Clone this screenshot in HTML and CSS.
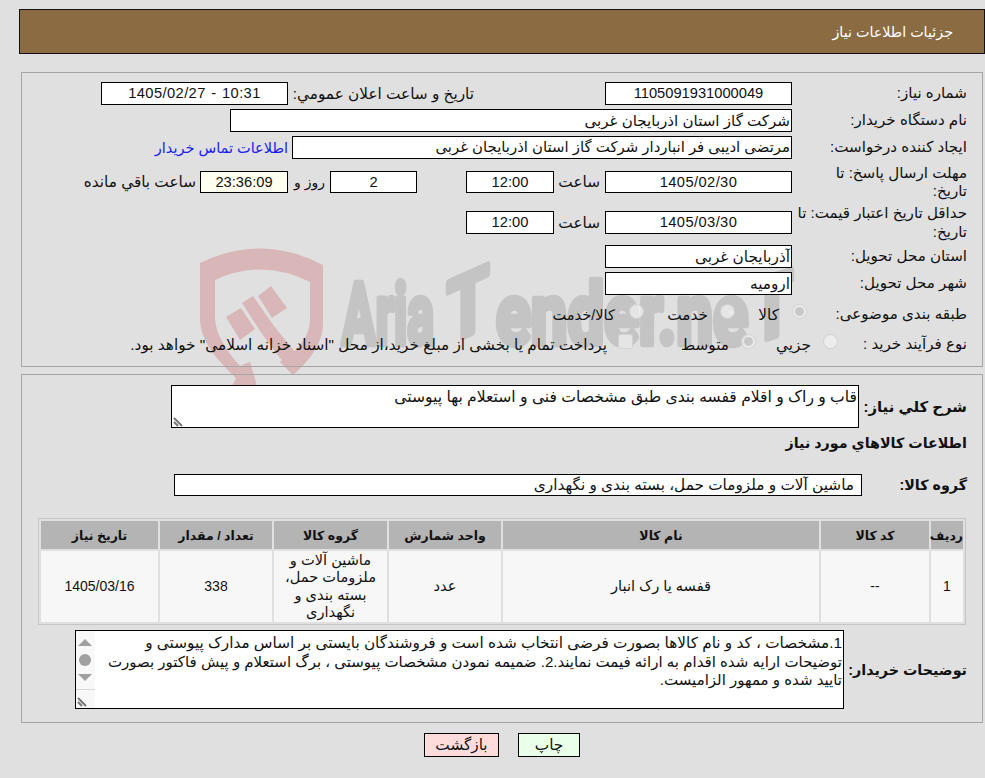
FILE: index.html
```html
<!DOCTYPE html>
<html lang="fa" dir="rtl">
<head>
<meta charset="utf-8">
<title>جزئیات اطلاعات نیاز</title>
<link rel="stylesheet" href="styles.css">
</head>
<body>
<svg class="watermark" width="985" height="440" viewBox="0 0 985 440" aria-hidden="true">
  <path class="wm-shield" fill-rule="evenodd" d="M200 263Q262 233 323 265V325Q322 350 293 375L280 362L296 350Q310 335 310 320V282Q262 258 215 280V318Q216 340 240 366L250 362L257 386H232L236 378Q200 345 200 320Z"/>
  <polygon class="wm-shield" points="226,317 241,308 255,329 240,340"/>
  <polygon class="wm-shield" points="242,303 253,296 274,326 262,334"/>
  <polygon class="wm-shield" points="258,296 271,286 287,308 272,318"/>
  <polygon class="wm-shield" points="262,334 274,326 303,362 293,375"/>
  <text class="wm-text" x="342" y="344" textLength="92" lengthAdjust="spacingAndGlyphs">Aria</text>
  <text class="wm-text" x="0" y="0" textLength="42" lengthAdjust="spacingAndGlyphs" transform="translate(447 344) skewY(-24)">T</text>
  <text class="wm-text" x="496" y="344" textLength="252" lengthAdjust="spacingAndGlyphs">ender.ne</text>
  <text class="wm-text" x="0" y="0" textLength="42" lengthAdjust="spacingAndGlyphs" transform="translate(751 344) skewY(-18)">T</text>
</svg>

<div class="page">
  <header class="title-bar">جزئیات اطلاعات نیاز</header>

  <section class="panel panel-info">
    <div class="row">
      <div class="label">شماره نیاز:</div>
      <div class="box box-main center">1105091931000049</div>
      <div class="label-inline announce">تاریخ و ساعت اعلان عمومي:</div>
      <div class="box box-main center date stamp">1405/02/27 - 10:31</div>
    </div>
    <div class="row">
      <div class="label">نام دستگاه خریدار:</div>
      <div class="box box-buyer">شرکت گاز استان اذربایجان غربی</div>
    </div>
    <div class="row">
      <div class="label">ایجاد کننده درخواست:</div>
      <div class="box box-creator">مرتضی ادیبی فر انباردار شرکت گاز استان اذربایجان غربی</div>
      <a class="contact" href="#">اطلاعات تماس خریدار</a>
    </div>
    <div class="row row-deadline">
      <div class="label">مهلت ارسال پاسخ: تا<br>تاریخ:</div>
      <div class="box box-main center date">1405/02/30</div>
      <div class="label-inline hour">ساعت</div>
      <div class="box box-time center">12:00</div>
      <div class="box box-days center">2</div>
      <div class="label-inline days">روز و</div>
      <div class="box box-count center">23:36:09</div>
      <div class="label-inline remain">ساعت باقي مانده</div>
    </div>
    <div class="row row-validity">
      <div class="label">حداقل تاریخ اعتبار قیمت: تا<br>تاریخ:</div>
      <div class="box box-main center date">1405/03/30</div>
      <div class="label-inline hour">ساعت</div>
      <div class="box box-time center">12:00</div>
    </div>
    <div class="row row-province">
      <div class="label">استان محل تحویل:</div>
      <div class="box box-main">آذربایجان غربی</div>
    </div>
    <div class="row">
      <div class="label">شهر محل تحویل:</div>
      <div class="box box-main">ارومیه</div>
    </div>
    <div class="row row-subject">
      <div class="label label-subject">طبقه بندی موضوعی:</div>
      <span class="radio checked"></span><span class="opt opt-goods">کالا</span>
      <span class="radio r-service"></span><span class="opt opt-service">خدمت</span>
      <span class="radio r-both"></span><span class="opt opt-both">کالا/خدمت</span>
    </div>
    <div class="row row-process">
      <div class="label label-process">نوع فرآیند خرید :</div>
      <span class="radio"></span><span class="opt opt-minor">جزیي</span>
      <span class="radio checked r-medium"></span><span class="opt opt-medium">متوسط</span>
      <span class="check"></span><span class="opt opt-pay">پرداخت تمام یا بخشی از مبلغ خرید،از محل "اسناد خزانه اسلامی" خواهد بود.</span>
    </div>
  </section>

  <section class="panel panel-detail">
    <div class="row row-desc">
      <div class="label-strong label-desc">شرح کلي نياز:</div>
      <div class="box box-desc">قاب و راک و اقلام قفسه بندی طبق مشخصات فنی و استعلام بها پیوستی
        <svg class="grip" width="12" height="12" viewBox="0 0 12 12"><path d="M1 3L9 11M1 7L5 11" stroke="#777" stroke-width="2"/></svg>
      </div>
    </div>
    <h2 class="label-strong section-title">اطلاعات کالاهاي مورد نياز</h2>
    <div class="row row-group">
      <div class="label-strong label-group">گروه کالا:</div>
      <div class="box box-group">ماشین آلات و ملزومات حمل، بسته بندی و نگهداری</div>
    </div>
    <table class="items">
      <colgroup>
        <col class="c-row"><col class="c-code"><col class="c-name"><col class="c-unit"><col class="c-group"><col class="c-qty"><col class="c-date">
      </colgroup>
      <thead>
        <tr><th>ردیف</th><th>کد کالا</th><th>نام کالا</th><th>واحد شمارش</th><th>گروه کالا</th><th>تعداد / مقدار</th><th>تاریخ نیاز</th></tr>
      </thead>
      <tbody>
        <tr><td>1</td><td>--</td><td class="td-text">قفسه یا رک انبار</td><td class="td-text">عدد</td><td class="td-text">ماشین آلات و ملزومات حمل، بسته بندی و نگهداری</td><td>338</td><td>1405/03/16</td></tr>
      </tbody>
    </table>
    <div class="row row-notes">
      <div class="label-strong label-notes">توضیحات خریدار:</div>
      <div class="box box-notes">
        <div class="notes-text"><span class="notes-wide">1.مشخصات ، کد و نام کالاها بصورت فرضی انتخاب شده است و فروشندگان بایستی بر اساس مدارک پیوستی و</span><br>توضیحات ارایه شده اقدام به ارائه فیمت نمایند.2. ضمیمه نمودن مشخصات پیوستی ، برگ استعلام و پیش فاکتور بصورت<br>تایید شده و ممهور الزامیست.</div>
        <div class="scroll">
          <svg class="scroll-art" width="19" height="77" viewBox="0 0 19 77">
            <path d="M2 15L9 8L16 15Z" fill="#a0a0a0"/>
            <circle cx="9" cy="29" r="6" fill="#a0a0a0"/>
            <path d="M2 43L9 50L16 43Z" fill="#a0a0a0"/>
            <path d="M0 58.5H19" stroke="#d8d8d8"/>
            <path d="M2 67L10 75M2 71L6 75" stroke="#777" stroke-width="2"/>
          </svg>
        </div>
      </div>
    </div>
  </section>

  <div class="actions">
    <button class="btn btn-print" type="button">چاپ</button>
    <button class="btn btn-back" type="button">بازگشت</button>
  </div>
</div>
</body>
</html>
```
FILE: styles.css
```css
html, body {
  margin: 0;
  padding: 0;
  background: #e0e0e0;
}
body {
  position: relative;
  width: 985px;
  height: 778px;
  overflow: hidden;
  font-family: "Liberation Sans", "DejaVu Sans", sans-serif;
  font-size: 15.3px;
  color: #111;
}
.watermark {
  position: absolute;
  left: 0;
  top: 0;
  z-index: 0;
  direction: ltr;
}
.wm-shield { fill: #d9b6b7; }
.wm-text {
  font-family: Roboto, "Liberation Sans", sans-serif;
  font-weight: 700;
  font-size: 86px;
  fill: #c4c4c4;
  stroke: #c4c4c4;
  stroke-width: 6.5px;
  stroke-linejoin: round;
}
.page {
  position: relative;
  z-index: 1;
  padding-top: 9px;
}
.title-bar {
  box-sizing: border-box;
  width: 966px;
  height: 45px;
  margin-left: 19px;
  padding-right: 31px;
  background: #8b6c42;
  border: 1px solid #111;
  color: #fff;
  font-size: 14.3px;
  line-height: 44px;
}
.panel {
  box-sizing: border-box;
  width: 962px;
  margin-right: 2px;
  margin-left: 21px;
  border: 1px solid #a5a5a5;
  padding-left: 15px;
  padding-right: 15px;
}
.panel-info {
  height: 295px;
  margin-top: 18px;
  padding-top: 9px;
}
.panel-detail {
  height: 349px;
  margin-top: 7px;
  padding-top: 10px;
}
.row {
  display: flex;
  align-items: center;
  min-height: 23px;
  margin-bottom: 4px;
}
.row-deadline { height: 38px; margin-top: 3px; margin-bottom: 3px; }
.row-validity { height: 37px; margin-bottom: 4px; }
.row-subject { margin-top: 8px; height: 23px; margin-bottom: 7px; }
.row-process { height: 23px; margin-bottom: 0; }

.label {
  flex: none;
  width: 175px;
  box-sizing: border-box;
  font-size: 15.1px;
  line-height: 18.5px;
}
.label-subject { width: 160px; }
.label-process { width: 129px; }
.label-inline { flex: none; white-space: nowrap; box-sizing: border-box; }
.announce { width: 317px; padding-right: 131px; }
.hour { width: 51px; padding-right: 5px; }
.days { width: 42px; padding-right: 5px; font-size: 14px; }
.remain { margin-right: 4px; }

.box {
  box-sizing: border-box;
  flex: none;
  height: 23px;
  padding: 0 1px;
  background: #fff;
  border: 1px solid #000;
  line-height: 21px;
  white-space: nowrap;
  overflow: hidden;
}
.center { text-align: center; font-size: 14.7px; }
.date { direction: ltr; letter-spacing: .4px; }
.stamp { word-spacing: 1px; }
.box-main { width: 187px; }
.box-buyer { width: 562px; font-size: 15.1px; }
.box-creator { width: 500px; font-size: 14.9px; }
.box-time { width: 88px; }
.box-days { width: 87px; margin-right: 49px; }
.box-count { width: 88px; background: #fffff0; }
.row-deadline .box { height: 22px; line-height: 20px; }
.contact {
  flex: none;
  margin-right: 4px;
  color: #1a1aee;
  font-size: 14.5px;
  text-decoration: none;
}

.radio, .check {
  flex: none;
  box-sizing: border-box;
  position: relative;
  width: 15px;
  height: 15px;
  margin-bottom: 6px;
  background: rgba(240, 240, 240, .75);
  border: 1px solid rgba(205, 205, 205, .8);
  border-radius: 50%;
}
.check { border-radius: 3px; margin-right: 51px; }
.radio.checked::after {
  content: "";
  position: absolute;
  inset: 2px;
  border-radius: 50%;
  background: #c8c8c8;
}
.opt { flex: none; white-space: nowrap; }
.opt-goods { width: 18px; margin-right: 13px; }
.r-service { margin-right: 26px; }
.opt-service { width: 39px; margin-right: 12px; }
.r-both { margin-right: 25px; }
.opt-both { margin-right: 14px; font-size: 14.6px; }
.opt-minor { width: 35px; margin-right: 12px; }
.r-medium { margin-right: 20px; }
.opt-medium { width: 45px; margin-right: 12px; }
.opt-pay { margin-right: 11px; }

.label-strong {
  margin: 0;
  font-size: 14.3px;
  font-weight: 700;
  white-space: nowrap;
}
.label-desc, .label-group, .label-notes { flex: none; }
.row-desc { margin-bottom: 0; align-items: flex-start; }
.label-desc { width: 108px; margin-top: 13px; font-size: 14.9px; }
.box-desc {
  position: relative;
  width: 688px;
  height: 43px;
  font-size: 15.6px;
  white-space: normal;
}
.grip {
  position: absolute;
  left: 1px;
  bottom: 0;
}
.section-title { height: 22px; margin-top: 4px; line-height: 22px; }
.row-group { margin-top: 19px; margin-bottom: 0; }
.label-group { width: 105px; }
.box-group { width: 688px; height: 22px; line-height: 20px; padding-right: 7px; }

.items {
  box-sizing: border-box;
  width: 928px;
  margin-top: 22px;
  margin-right: 1px;
  border: 1px solid #c6c6c6;
  border-spacing: 2px;
  table-layout: fixed;
  text-align: center;
  font-size: 14px;
}
.c-row { width: 32px; }
.c-code { width: 108px; }
.c-name { width: 316px; }
.c-unit { width: 112px; }
.c-group { width: 113px; }
.c-qty { width: 112px; }
.c-date { width: 117px; }
.items th {
  height: 28px;
  padding: 0;
  background: #b4b4b4;
  font-size: 12.5px;
  font-weight: 700;
}
.items td {
  height: 71px;
  padding: 0 6px;
  background: #f7f7f7;
  line-height: 17.3px;
}
.items .td-text { font-size: 14.6px; }
.row-notes { margin-top: 5px; margin-bottom: 0; }
.label-notes { width: 123px; }
.box-notes {
  display: flex;
  width: 769px;
  height: 79px;
  padding: 0;
}
.notes-text {
  flex: 1;
  min-width: 0;
  padding: 3px 1px 0;
  font-size: 15px;
  line-height: 18.5px;
}
.notes-wide { font-size: 15.3px; }
.scroll {
  flex: none;
  width: 19px;
  height: 77px;
  background: #f8f8f8;
}
.scroll-art { display: block; }

.actions {
  display: flex;
  gap: 19px;
  margin-top: 10px;
  margin-right: 405px;
}
.btn {
  box-sizing: border-box;
  height: 24px;
  padding: 0;
  border: 1px solid #000;
  color: #111;
  font: inherit;
  line-height: 20px;
}
.btn-print { width: 62px; background: #e9ffe9; }
.btn-back { width: 75px; background: #ffdcdc; }
```
